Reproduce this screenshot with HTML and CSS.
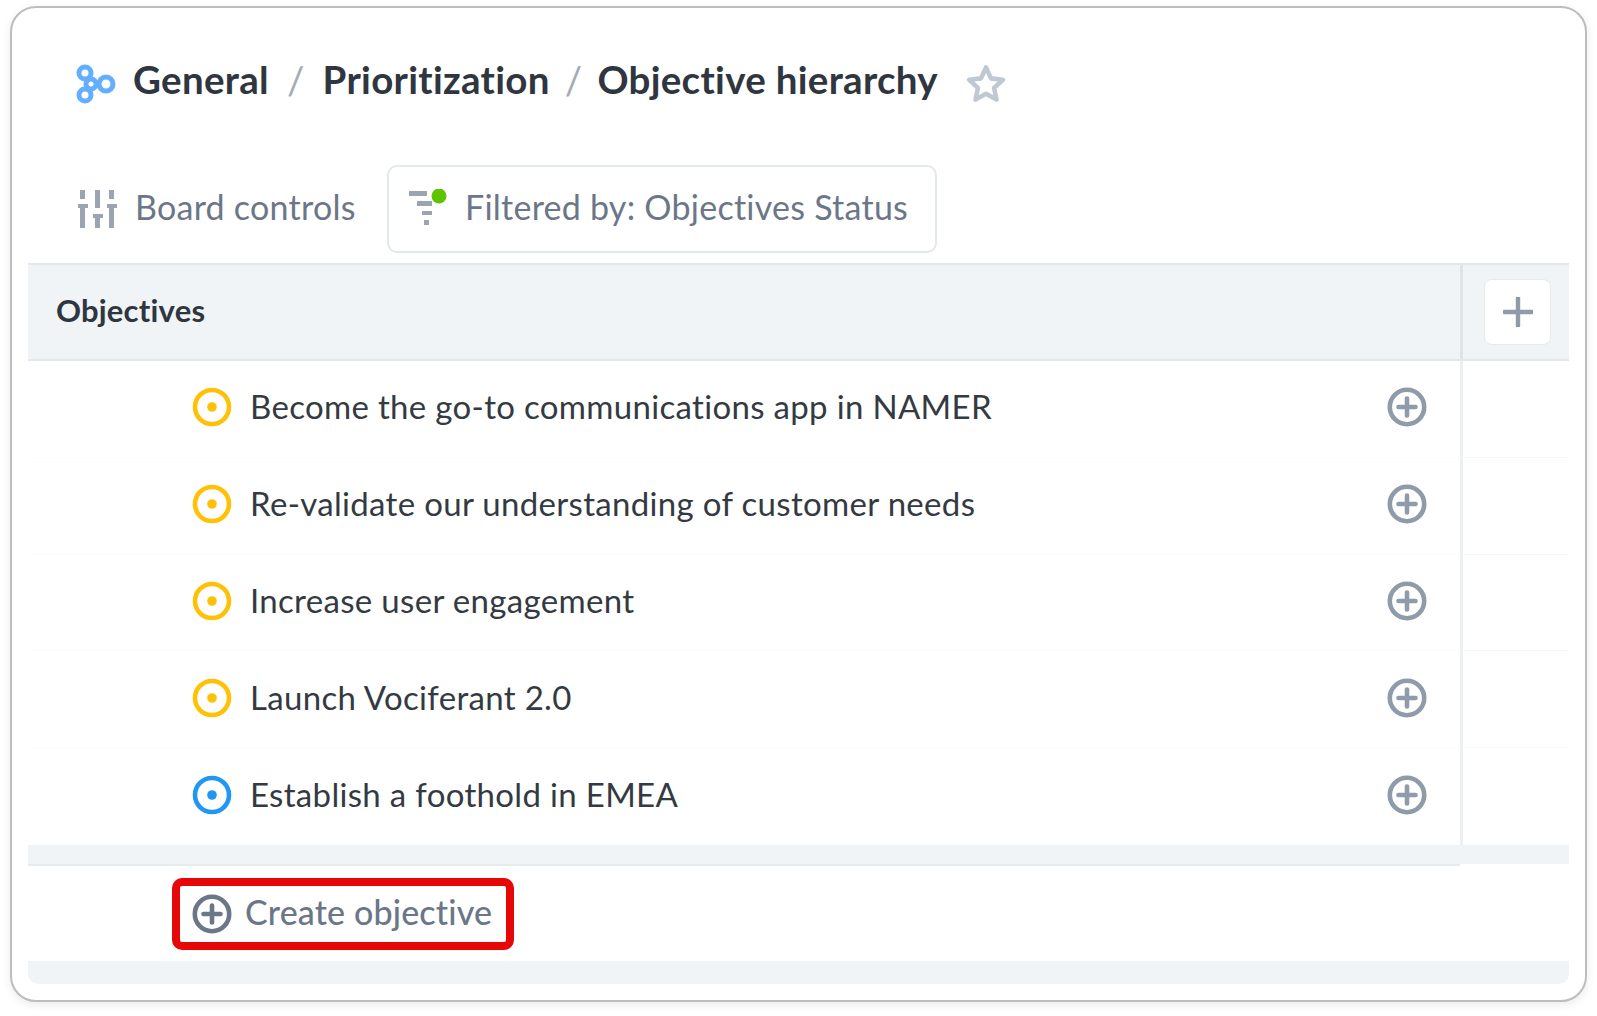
FILE: index.html
```html
<!DOCTYPE html>
<html lang="en">
<head>
<meta charset="utf-8">
<title>Objective hierarchy</title>
<link rel="stylesheet" href="styles.css">
</head>
<body>
<svg class="defs" width="0" height="0" aria-hidden="true">
  <symbol id="target" viewBox="0 0 40 40"><circle cx="20" cy="20" r="17" fill="none" stroke="currentColor" stroke-width="4.6"/><circle cx="20" cy="20" r="4.8" fill="currentColor"/></symbol>
  <symbol id="plus-circle" viewBox="0 0 40 40"><circle cx="20" cy="20" r="17.2" fill="none" stroke="currentColor" stroke-width="4.6"/><path d="M20 11.5v17M11.5 20h17" fill="none" stroke="currentColor" stroke-width="4.6" stroke-linecap="round"/></symbol>
</svg>
<main class="card">
  <header class="title">
    <svg class="logo" viewBox="0 0 40 40"><g fill="none" stroke="#63aeff" stroke-width="5"><circle cx="9" cy="9" r="6"/><circle cx="30" cy="20" r="7"/><circle cx="9" cy="31" r="6"/><circle cx="15" cy="20" r="5"/></g></svg>
    <span class="crumb">General</span><span class="sep">/</span>
    <span class="crumb">Prioritization</span><span class="sep tight">/</span>
    <span class="crumb">Objective hierarchy</span>
    <svg class="star" viewBox="0 0 40 40"><path d="M20 3.5l5 10.9 11.9 1.4-8.8 8.1 2.4 11.7L20 29.7 9.5 35.6l2.4-11.7-8.8-8.1L15 14.4z" fill="none" stroke="#c0c9d2" stroke-width="4.6" stroke-linejoin="round"/></svg>
  </header>
  <div class="controls">
    <div class="board">
      <svg class="ctl-icon" viewBox="0 0 40 40"><path d="M3 1h5v9H3zM18 1h5v18h-5zM32 1h5v9h-5zM1 15h10v4H8v20H3V19H1zM16 25h10v4h-3v10h-5V29h-2zM30 15h10v4h-3v20h-5V19h-2z" fill="#9aa5b1"/></svg>
      <span>Board controls</span>
    </div>
    <div class="filter">
      <svg class="ctl-icon" viewBox="0 0 40 40"><path d="M0 2h18v5H0zM8 12h15v5H8zM13 22h10v4H13zM15 31h5v5h-5z" fill="#9aa5b1"/><circle cx="30" cy="7" r="7.5" fill="#5fc400"/></svg>
      <span>Filtered by: Objectives Status</span>
    </div>
  </div>
  <section class="table">
    <div class="head">
      <div class="head-main">Objectives</div>
      <div class="head-side"><div class="add-col"><svg viewBox="0 0 30 30"><path d="M15 1v28M1 15h28" fill="none" stroke="#8f9ba8" stroke-width="4.4" stroke-linecap="round"/></svg></div></div>
    </div>
    <div class="row"><div class="row-main"><svg class="status amber"><use href="#target"/></svg><span class="name">Become the go-to communications app in NAMER</span><svg class="add"><use href="#plus-circle"/></svg></div><div class="row-side"></div></div>
    <div class="row"><div class="row-main"><svg class="status amber"><use href="#target"/></svg><span class="name">Re-validate our understanding of customer needs</span><svg class="add"><use href="#plus-circle"/></svg></div><div class="row-side"></div></div>
    <div class="row"><div class="row-main"><svg class="status amber"><use href="#target"/></svg><span class="name">Increase user engagement</span><svg class="add"><use href="#plus-circle"/></svg></div><div class="row-side"></div></div>
    <div class="row"><div class="row-main"><svg class="status amber"><use href="#target"/></svg><span class="name">Launch Vociferant 2.0</span><svg class="add"><use href="#plus-circle"/></svg></div><div class="row-side"></div></div>
    <div class="row last"><div class="row-main"><svg class="status blue"><use href="#target"/></svg><span class="name">Establish a foothold in EMEA</span><svg class="add"><use href="#plus-circle"/></svg></div><div class="row-side"></div></div>
    <div class="band"><div class="band-main"></div><div class="band-side"></div></div>
    <div class="create-row">
      <div class="create"><svg class="create-icon"><use href="#plus-circle"/></svg><span class="create-text">Create objective</span></div>
    </div>
    <div class="foot"></div>
  </section>
</main>
</body>
</html>
```
FILE: styles.css
```css
* { box-sizing: border-box; }
html, body { margin: 0; padding: 0; background: #fff; }
body { height: 1016px; overflow: hidden; padding: 6px 10px 0 10px; font-family: Lato, "Liberation Sans", sans-serif; font-variant-ligatures: none; }
.defs { position: absolute; }
.card { width: 1577px; height: 996px; border: 2px solid #bdbdbd; border-radius: 26px; background: #fff; box-shadow: 0 3px 10px rgba(0,0,0,.08); padding: 0 16px; display: flex; flex-direction: column; }
.title { height: 157px; padding: 56px 0 0 48px; display: flex; align-items: flex-start; color: #2f3640; font-size: 38.5px; font-weight: 700; line-height: 42px; letter-spacing: .3px; }
.logo { width: 40px; height: 40px; margin: 0 17px 0 0; flex: none; }
.crumb { margin-top: -6px; }
.sep { color: #a3acb5; font-weight: 400; margin: -6px 18px 0; }
.sep.tight { margin-left: 15px; margin-right: 15px; }
.star { width: 40px; height: 40px; margin-left: 28px; flex: none; }
.controls { height: 98px; display: flex; align-items: flex-start; color: #6b7788; font-size: 34px; line-height: 40px; letter-spacing: .25px; }
.board { display: flex; align-items: center; gap: 18px; padding: 24px 0 0 49px; width: 359px; }
.board span { margin-top: -4px; }
.ctl-icon { width: 40px; height: 40px; flex: none; }
.filter { display: flex; align-items: center; gap: 16px; width: 550px; height: 88px; border: 2px solid #e3e8ed; border-radius: 10px; padding-left: 20px; }
.filter span { margin-top: -4px; }
.table { display: flex; flex-direction: column; color: #343a42; }
.head { display: flex; height: 98px; background: #f0f4f7; border-top: 2px solid #e4e8ed; border-bottom: 2px solid #e4e8ed; }
.head-main { width: 1432px; padding-left: 28px; font-size: 31px; font-weight: 700; line-height: 90px; color: #2f3640; letter-spacing: .2px; }
.head-side { flex: 1; border-left: 3px solid #dfe4e9; padding: 14px 0 0 21px; }
.add-col { width: 67px; height: 66px; background: #fff; border: 1px solid #e6eaee; border-radius: 8px; display: flex; align-items: center; justify-content: center; }
.add-col svg { width: 30px; height: 30px; }
.row { display: flex; height: 96.8px; }
.row-main { width: 1432px; display: flex; align-items: center; padding: 0 0 3px 164px; border-bottom: 1px solid #fbfcfc; }
.row-side { flex: 1; border-left: 3px solid #eceff2; border-bottom: 1px solid #f6f7f8; }
.row.last .row-main, .row.last .row-side { border-bottom: 0; }
.status { width: 40px; height: 40px; flex: none; }
.amber { color: #ffc107; }
.blue { color: #2196f3; }
.name { margin-left: 18px; flex: 1; font-size: 33px; letter-spacing: .32px; padding-bottom: 2px; }
.add { width: 40px; height: 40px; flex: none; margin-right: 33px; color: #8f9ba8; }
.band { display: flex; align-items: flex-start; }
.band-main { width: 1432px; height: 21px; background: #f0f4f7; border-bottom: 2px solid #e6ebf0; }
.band-side { flex: 1; height: 19px; background: #f0f4f7; }
.create-row { height: 95px; padding: 12px 0 0 144px; }
.create { width: 342px; height: 72px; border: 8px solid #e60808; border-radius: 10px; display: flex; align-items: center; gap: 13px; padding-left: 12px; color: #6b7788; font-size: 34px; font-weight: 500; letter-spacing: .15px; }
.create-icon { width: 40px; height: 40px; flex: none; color: #6b7686; }
.create-text { padding-bottom: 4px; }
.foot { height: 23px; background: #f0f4f7; border-radius: 0 0 10px 10px; }
```
